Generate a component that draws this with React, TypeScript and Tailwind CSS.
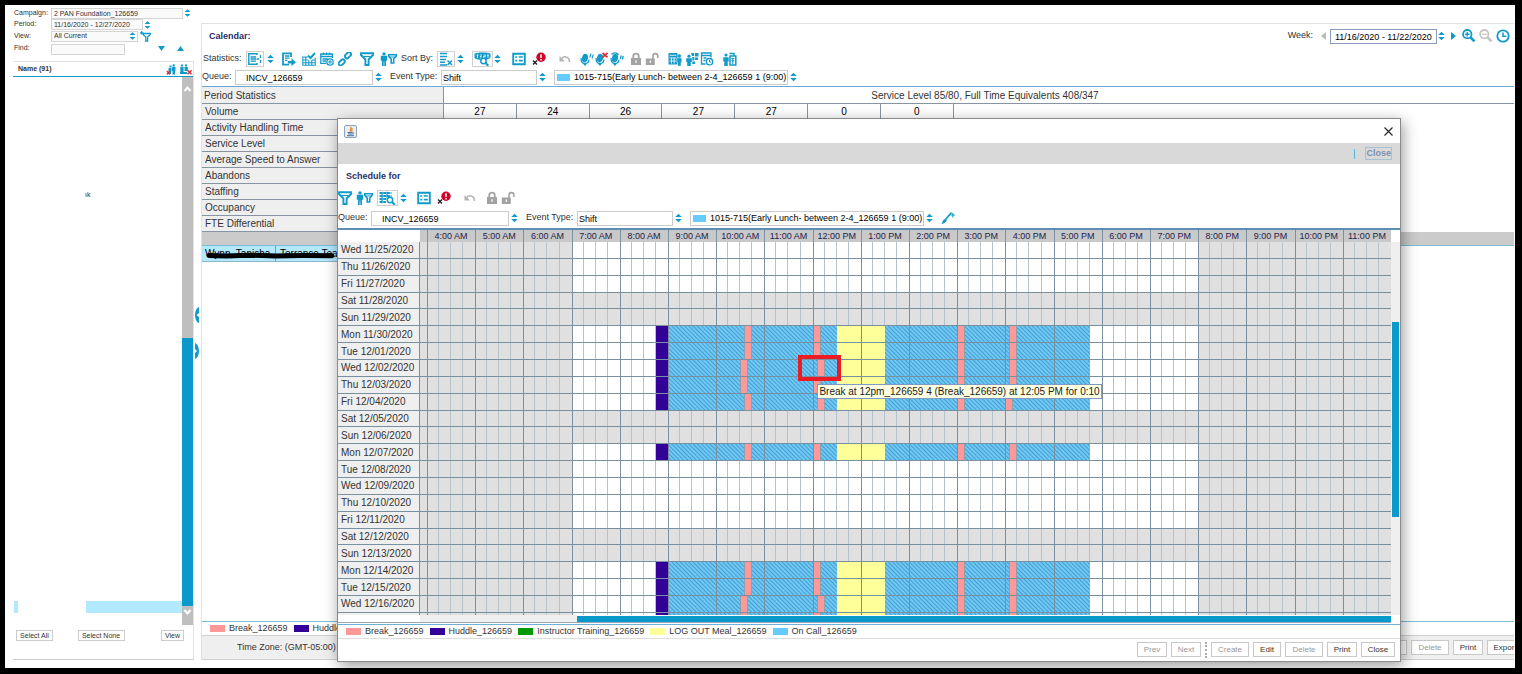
import type { ReactNode } from "react";
import clsx from "clsx";

const BLUE = "#129acb";
const GRAY = "#a3a3a3";

const HOURS = [
  "4:00 AM", "5:00 AM", "6:00 AM", "7:00 AM", "8:00 AM", "9:00 AM", "10:00 AM",
  "11:00 AM", "12:00 PM", "1:00 PM", "2:00 PM", "3:00 PM", "4:00 PM", "5:00 PM",
  "6:00 PM", "7:00 PM", "8:00 PM", "9:00 PM", "10:00 PM", "11:00 PM"
];

const START = 4 * 60;
const SPAN = 20 * 60;

type Kind = "huddle" | "call" | "break" | "meal";
type Shift = { kind: Kind; from: number; to: number };
type Day = { label: string; weekend?: boolean; breaks?: number[] };

const at = (h: number, m = 0) => h * 60 + m;
const pct = (t: number) => `${((t - START) / SPAN) * 100}%`;
// five minute grid line, 1-based
const col = (t: number) => (t - START) / 5 + 1;

const DAYS: Day[] = [
  { label: "Wed 11/25/2020" },
  { label: "Thu 11/26/2020" },
  { label: "Fri 11/27/2020" },
  { label: "Sat 11/28/2020", weekend: true },
  { label: "Sun 11/29/2020", weekend: true },
  { label: "Mon 11/30/2020", breaks: [at(10, 35), at(12), at(15), at(16, 5)] },
  { label: "Tue 12/01/2020", breaks: [at(10, 35), at(12), at(15), at(16, 5)] },
  { label: "Wed 12/02/2020", breaks: [at(10, 30), at(12, 5), at(15), at(16, 5)] },
  { label: "Thu 12/03/2020", breaks: [at(10, 30), at(12), at(15), at(16, 5)] },
  { label: "Fri 12/04/2020", breaks: [at(10, 35), at(12, 5), at(15), at(16)] },
  { label: "Sat 12/05/2020", weekend: true },
  { label: "Sun 12/06/2020", weekend: true },
  { label: "Mon 12/07/2020", breaks: [at(10, 35), at(12), at(15), at(16, 5)] },
  { label: "Tue 12/08/2020" },
  { label: "Wed 12/09/2020" },
  { label: "Thu 12/10/2020" },
  { label: "Fri 12/11/2020" },
  { label: "Sat 12/12/2020", weekend: true },
  { label: "Sun 12/13/2020", weekend: true },
  { label: "Mon 12/14/2020", breaks: [at(10, 35), at(12), at(15), at(16, 5)] },
  { label: "Tue 12/15/2020", breaks: [at(10, 35), at(12), at(15), at(16, 5)] },
  { label: "Wed 12/16/2020", breaks: [at(10, 30), at(12, 5), at(15), at(16, 5)] },
  { label: "", breaks: [at(10, 30), at(12), at(15), at(16, 5)] }
];

const FILL: Record<Kind, string> = {
  huddle: "bg-[#330099]",
  call: "bg-[repeating-linear-gradient(45deg,#6cc9f8_0px,#6cc9f8_1px,#4c9cc8_2px,#6cc9f8_3px)]",
  break: "bg-[#ff9999] border-x border-[#8fa0ac]",
  meal: "bg-[#ffff99]"
};

function shiftsFor(day: Day): Shift[] {
  if (!day.breaks) return [];
  return [
    { kind: "huddle", from: at(8, 45), to: at(9) },
    { kind: "call", from: at(9), to: at(17, 45) },
    { kind: "meal", from: at(12, 30), to: at(13, 30) },
    ...day.breaks.map((t): Shift => ({ kind: "break", from: t, to: t + 10 }))
  ];
}

/* ---------- icons ---------- */

function Icon({ children, w = 14, color = BLUE }: { children: ReactNode; w?: number; color?: string }) {
  return (
    <svg
      width={w}
      height={14}
      viewBox={`0 0 ${w} 14`}
      fill="none"
      stroke={color}
      strokeWidth={1.5}
      className="shrink-0"
      aria-hidden="true"
    >
      {children}
    </svg>
  );
}

function Stepper() {
  return (
    <svg width="7" height="10" viewBox="0 0 7 10" fill={BLUE} className="shrink-0" aria-hidden="true">
      <path d="M3.500.8 6.800 4H.2zM3.500 9.200.2 6h6.600z" />
    </svg>
  );
}

const Funnel = () => (
  <Icon>
    <path d="M1 1.200h12v1.800L8.600 7.500V13H5.400V7.500L1 3z" strokeWidth={1.900} />
    <path d="M3.500 4.500h7" strokeWidth={1.200} />
  </Icon>
);

const PersonFunnel = () => (
  <Icon w={17}>
    <g fill={BLUE} stroke="none">
      <circle cx="4" cy="1.900" r="1.700" />
      <path d="M.8 3.800h6.400v5H6V14H4.300V9.500h-.6V14H2V8.800H.8z" />
    </g>
    <path d="M8.700 2.800h7.500v1.400L13.700 7v4h-2.500V7L8.700 4.200z" strokeWidth={1.600} />
    <path d="M9.500 5h5.500" strokeWidth={1} />
  </Icon>
);

const ListPlus = () => (
  <Icon>
    <path d="M9 3V1.800H.8v10.500H9V11" strokeWidth={1.400} />
    <path d="M2.500 5h5.500M2.500 7h5.500M2.500 9.200h5.500" strokeWidth={1.300} />
    <path d="M8.500 7h2.500M12.500 3v3M12.500 8v3" strokeWidth={1.300} />
  </Icon>
);

const ExportPage = () => (
  <Icon>
    <path d="M9 5V1.300H1v11.400h6" strokeWidth={1.800} />
    <path d="M3 4h4.500M3 6.200h4.500M3 8.400h2.500" strokeWidth={1.300} />
    <path d="M5.800 9H9.500V6.300L14 10.300l-4.500 3.700v-2.500H5.800z" fill={BLUE} stroke="none" />
  </Icon>
);

const CalendarCheck = () => (
  <Icon>
    <path d="M.8 4.500v8.700h12.400V5.500M.8 5h5M.8 8h5M10 8h3M.8 10.700h12.400M3.800 5v8M6.800 8v5M9.800 8v5" strokeWidth={1.100} />
    <path d="M6 3.500 8.500 6 13 1" strokeWidth={1.900} />
  </Icon>
);

const CalendarClock = () => (
  <Icon>
    <path d="M6 11.300H.8V2h11.700v4M.8 4.500h11.700M2.500 7h5.500M2.500 9h3.500" strokeWidth={1.300} />
    <path d="M3.500.5V3M6.500.5V3M9.500.5V3" strokeWidth={1.200} />
    <circle cx="10" cy="10" r="3.200" strokeWidth={1.300} fill="#fff" />
    <path d="M10 8v4M8 10h4" strokeWidth={1} />
  </Icon>
);

const LinkIcon = () => (
  <Icon>
    <rect x="-1" y="-2" width="7" height="4" rx="2" transform="translate(8.200 5) rotate(-45)" strokeWidth={1.900} />
    <rect x="-6" y="-2" width="7" height="4" rx="2" transform="translate(5.500 8.700) rotate(-45)" strokeWidth={1.900} />
  </Icon>
);

const SortX = () => (
  <Icon>
    <path d="M1 1.500h7M1 4.500h7M1 7.500h6M1 10.300h5M1 13h7" strokeWidth={1.500} />
    <path d="m8.500 8.500 4.500 4.500M13 8.500 8.500 13" strokeWidth={1.500} />
  </Icon>
);

const TagSearch = () => (
  <Icon w={17}>
    <path d="M.5 1.500C5 .2 12 .2 16.500 1.500v4.300c-2 1.500-4 2-6 2H6C3 7.500 2 7 .5 6z" fill={BLUE} stroke="none" />
    <path d="M3.500 3v3M2.500 3h2M6 3h1.800M6 4.500h1.500M6 6h1.800M9.500 3h1.800v1.500H9.500V6h1.800M13 3h2M14 3v3" stroke="#fff" strokeWidth={0.8} />
    <circle cx="9.500" cy="9" r="2.700" fill="#fff" strokeWidth={1.500} />
    <path d="m11.500 11 2.800 2.800" strokeWidth={2} />
  </Icon>
);

const GridSearch = () => (
  <Icon w={17}>
    <path d="M.5 2h12M.5 5h12M.5 8h7.500M.5 11h6.500" strokeWidth={1.900} strokeDasharray="3 .7" />
    <path d="M3 .8v11.500M8 .8v6" strokeWidth={1.200} />
    <circle cx="11" cy="9" r="2.700" fill="#fff" strokeWidth={1.500} />
    <path d="m13 11 2.800 2.800" strokeWidth={2} />
  </Icon>
);

const ListBox = () => (
  <Icon>
    <path d="M1.200 1.700h11.600v10.600H1.200z" strokeWidth={1.900} />
    <path d="M3.300 5h2M3.300 8.700h2M6.800 5h4M6.800 8.700h4" strokeWidth={1.700} />
  </Icon>
);

const ErrorX = () => (
  <Icon>
    <circle cx="9" cy="5.200" r="4.700" fill="#d4002a" stroke="none" />
    <path d="M9 2.200v3.800M9 7v1.500" stroke="#fff" strokeWidth={1.500} />
    <path d="m1 8.500 4 4M5 8.500l-4 4" stroke="#222" strokeWidth={1.400} />
  </Icon>
);

const Undo = () => (
  <Icon w={12} color="#b4b4b4">
    <path d="M2.500 7C4 3.500 10.500 4 10.500 10" strokeWidth={1.600} />
    <path d="M.5 4v5.500H6z" fill="#b4b4b4" stroke="none" />
  </Icon>
);

function Mic({ mark }: { mark: "waves" | "x" | "arc" }) {
  return (
    <Icon>
      <ellipse cx="5" cy="6" rx="3" ry="4.200" transform="rotate(12 5 6)" fill={BLUE} stroke="none" />
      <path d="M1 6c0 4 2 5.500 4 5.500S8.800 10.500 9 7.500" strokeWidth={1.300} />
      <path d="M2.800 11.500h4.200L5 14z" fill={BLUE} stroke="none" />
      {mark === "waves" && <path d="m9.700 5.500 1.300-4M12 6.500l1.300-4" strokeWidth={1.100} />}
      {mark === "x" && <path d="m7.500.8 5 4.600M12.500.8l-5 4.600" stroke="#d92f38" strokeWidth={1.800} />}
      {mark === "arc" && <path d="M1.500 2.500C3 .5 7 .3 8.500 2.800M10.300 7l1-3.500M12.300 7.500l1-3.500" strokeWidth={1.300} />}
    </Icon>
  );
}

const Lock = () => (
  <Icon w={12} color={GRAY}>
    <path d="M1 6h10v7H1z" fill={GRAY} stroke="none" />
    <path d="M3.300 7V4c0-3.200 5.400-3.200 5.400 0v3" strokeWidth={1.900} />
    <path d="M6 8.200v2.800" stroke="#fff" strokeWidth={1.200} />
  </Icon>
);

const Unlock = () => (
  <Icon color={GRAY}>
    <path d="M.8 6.500h9V13h-9z" fill={GRAY} stroke="none" />
    <path d="M8 7V4c0-3.200 4.800-3.200 4.800 0v2" strokeWidth={1.600} />
    <path d="M5.300 8.500v2.500" stroke="#fff" strokeWidth={1.200} />
  </Icon>
);

const GridPerson = () => (
  <Icon>
    <path d="M.5 1h9v11.500h-9z" fill={BLUE} stroke="none" />
    <path d="M1.700 3.300h6.600M1.500 6H8M1.500 9H8M3.500 5.500v6M6.200 5.500v6" stroke="#fff" strokeWidth={0.8} />
    <path d="M8.800 5.800h5v4.700h-.8V14h-3.400v-3.500h-.8z" fill={BLUE} stroke="#fff" strokeWidth={0.500} />
    <circle cx="11.300" cy="4" r="1.700" fill={BLUE} stroke="none" />
  </Icon>
);

const People = () => (
  <Icon>
    <g fill={BLUE} stroke="none">
      <circle cx="4" cy="4.200" r="1.600" />
      <path d="M1.200 6.300h5.600V10H5.800v4H2.200v-4h-1zM6 1h3v3H7zM10 1h3.500v3.500H10zM7.300 5h2v3.500h-2zM10 5.500h3V8h-3zM7.300 9.500H10V12H7.300z" />
    </g>
  </Icon>
);

const PageClock = () => (
  <Icon>
    <path d="M5.500 12H1.500V1h9.500v4.500M1.500 3.500H11M3.500 6h3M3.500 8.500h2" strokeWidth={1.300} />
    <circle cx="9.500" cy="9.700" r="3.200" fill="#fff" strokeWidth={1.300} />
    <path d="M9.500 8v2h1.800" strokeWidth={1} />
  </Icon>
);

const PersonDoc = () => (
  <Icon>
    <circle cx="3" cy="3" r="1.600" fill={BLUE} stroke="none" />
    <path d="M.3 5.200h5.400V9.500h-1V14H1.300V9.500h-1z" fill={BLUE} stroke="none" />
    <path d="M7 4h5.800v9H7zM6.500 1.500h4.500V4" strokeWidth={1.500} />
    <path d="M8.300 6.500h3M8.300 8.800h3M9.800 6v6" strokeWidth={1.100} />
  </Icon>
);

const Brush = () => (
  <Icon>
    <path d="M10.500 1.500 4.500 8.500" strokeWidth={1.800} />
    <path d="M5.800 8.800c0 2-2.500 3.900-5.300 4.200.9-1.200.8-3.500 3-5z" fill={BLUE} stroke="none" />
    <path d="M9.500 4H14M11.800 2v4.500" strokeWidth={1.100} />
  </Icon>
);

function Magnifier({ color, plus }: { color: string; plus?: boolean }) {
  return (
    <Icon color={color}>
      <circle cx="5.300" cy="5.200" r="4.200" strokeWidth={1.800} />
      <path d="m8.500 8.400 4 4" strokeWidth={2.700} />
      <path d={plus ? "M3 5.200h4.600M5.300 2.900v4.600" : "M3 5.200h4.600"} strokeWidth={1.400} />
    </Icon>
  );
}

const ClockIcon = () => (
  <Icon>
    <circle cx="7" cy="7" r="5.700" strokeWidth={1.800} />
    <path d="M7 3.500v3.800h3.300" strokeWidth={1.500} />
  </Icon>
);

/* ---------- small controls ---------- */

function Tool({ label, boxed, className, children }: { label: string; boxed?: boolean; className?: string; children: ReactNode }) {
  return (
    <button
      type="button"
      aria-label={label}
      className={clsx("flex h-4 shrink-0 items-center justify-center", boxed && "border border-[#cfcfcf] px-px", className)}
    >
      {children}
    </button>
  );
}

function PushButton({ children, label, disabled, className }: { children?: ReactNode; label?: string; disabled?: boolean; className?: string }) {
  return (
    <button
      type="button"
      aria-label={label}
      disabled={disabled}
      className={clsx(
        "h-[15px] shrink-0 border border-[#c8c8c8] bg-white text-center text-[8px] leading-[13px] text-[#333] disabled:text-[#999]",
        className
      )}
    >
      {children}
    </button>
  );
}

function QueueBar({ id, className, children }: { id: string; className: string; children?: ReactNode }) {
  return (
    <div className={clsx("flex shrink-0 items-center text-[9px] text-[#333]", className)}>
      <label htmlFor={`${id}-queue`} className="w-[33px]">Queue:</label>
      <select id={`${id}-queue`} className="h-[15px] w-[138px] appearance-none border border-[#ccc] pt-px pl-[10px] text-black">
        <option>INCV_126659</option>
      </select>
      <span className="ml-0.5"><Stepper /></span>
      <label htmlFor={`${id}-type`} className="ml-2 w-[51px]">Event Type:</label>
      <select id={`${id}-type`} className="h-[15px] w-24 appearance-none border border-[#ccc] pt-px pl-px text-black">
        <option>Shift</option>
      </select>
      <span className="ml-0.5"><Stepper /></span>
      <div className="ml-2 flex h-[15px] w-[234px] items-center border border-[#ccc] pl-0.5">
        <span className="h-[7px] w-[15px] bg-[#66ccff]" />
        <select aria-label="Event" className="ml-1 flex-1 appearance-none pt-px text-black">
          <option>1015-715(Early Lunch- between 2-4_126659 1 (9:00)</option>
        </select>
      </div>
      <span className="ml-0.5"><Stepper /></span>
      {children}
    </div>
  );
}

function LegendItem({ swatch, name }: { swatch: string; name: string }) {
  return (
    <span className="flex items-center gap-1">
      <span className={clsx("h-[7px] w-[15px]", swatch)} />
      {name}
    </span>
  );
}

/* ---------- left panel ---------- */

function Sidebar() {
  return (
    <aside className="flex w-[181px] shrink-0 flex-col pb-2 text-[7px] text-[#333]">
      <div className="flex h-14 shrink-0 flex-col pt-0.5 pl-px">
        <div className="flex h-3 items-center">
          <label htmlFor="campaign" className="w-[37px]">Campaign:</label>
          <select id="campaign" className="h-[11px] w-[132px] appearance-none border border-[#d4d4d4] bg-[#fafafa] pl-0.5">
            <option>2 PAN Foundation_126659</option>
          </select>
          <span className="ml-px scale-90"><Stepper /></span>
        </div>
        <div className="flex h-[11px] items-center">
          <label htmlFor="period" className="w-[37px]">Period:</label>
          <select id="period" className="h-[11px] w-[92px] appearance-none border border-[#d4d4d4] bg-[#fafafa] pl-0.5">
            <option>11/16/2020 - 12/27/2020</option>
          </select>
          <span className="ml-px scale-90"><Stepper /></span>
        </div>
        <div className="flex h-3 items-center">
          <label htmlFor="view" className="w-[37px]">View:</label>
          <div className="flex h-[11px] w-[87px] items-center justify-between border border-[#d4d4d4] bg-[#fafafa] pr-px pl-0.5">
            <select id="view" className="flex-1 appearance-none">
              <option>All Current</option>
            </select>
            <span className="scale-90"><Stepper /></span>
          </div>
          <button type="button" aria-label="Filter" className="ml-0.5">
            <svg width="11" height="11" viewBox="0 0 11 11" fill="none" stroke={BLUE} aria-hidden="true">
              <path d="M3 2.500h7.300v1L7.600 6v4H5.800V6L3 3.500z" strokeWidth="1.300" />
              <path d="M0 1.800h3.500M1.700 0v3.500" strokeWidth="1.200" />
            </svg>
          </button>
        </div>
        <div className="flex h-[13px] items-center">
          <label htmlFor="find" className="w-[37px]">Find:</label>
          <input id="find" className="mt-px h-[11px] w-[74px] border border-[#d4d4d4] bg-[#fafafa]" />
          <button type="button" aria-label="Find next" className="ml-[33px]">
            <svg width="7" height="5" viewBox="0 0 7 5" fill={BLUE}><path d="M0 0h7L3.500 5z" /></svg>
          </button>
          <button type="button" aria-label="Find previous" className="ml-3">
            <svg width="7" height="5" viewBox="0 0 7 5" fill={BLUE}><path d="M0 5h7L3.500 0z" /></svg>
          </button>
        </div>
      </div>
      <div className="flex min-h-0 flex-1 flex-col border-t border-r border-b border-[#e2e2e2] border-b-[#ccc]">
        <div className="flex h-[15px] shrink-0 items-center border-b border-[#129acb] pl-[5px] font-bold">
          <span className="flex-1">Name (91)</span>
          <svg width="27" height="11" viewBox="0 0 27 11" fill={BLUE} aria-hidden="true">
            <path d="M3.500 1.500h2v2h-2zM2.500 4h3v3.500H5V10H3V7.500h-.5zM6.700.3h2v2h-2zM6 2.800h3.500V7H9v3.500H6.500V7H6z" />
            <path d="m.8 7 3 3.500M3.800 7l-3 3.500" stroke="#d92f38" strokeWidth="1.200" />
            <path d="M15 .5h2v2h-2zM19 .5h2v2h-2zM14.300 3h3.300v5h-3.300zM18.500 3h3.300v4h-3.300zM14 8h7v2h-7z" />
            <path d="m21.500 6.300 4 4M25.500 6.300l-4 4" stroke="#d92f38" strokeWidth="1.500" />
          </svg>
        </div>
        <div className="flex min-h-0 flex-1">
          <div className="flex flex-1 flex-col justify-between pl-px">
            <p className="mt-28 ml-[71px] text-[7px] leading-3">ık</p>
            <div className="mb-3 flex h-3 justify-between">
              <span className="w-1 bg-[#b2e9ff]" />
              <span className="w-24 bg-[#b2e9ff]" />
            </div>
          </div>
          <div className="flex w-[11px] flex-col bg-[#bfbfbf]">
            <svg width="11" height="261" viewBox="0 0 11 261" fill="none" stroke="#fff" strokeWidth="2" aria-hidden="true">
              <path d="m2.500 14 3-3.500L8.500 14" />
            </svg>
            <div className="flex-1 bg-[#0c98cb]" />
            <svg width="11" height="19" viewBox="0 0 11 19" fill="none" stroke="#fff" strokeWidth="2" aria-hidden="true">
              <path d="m2.500 4 3 3.500L8.500 4" />
            </svg>
          </div>
        </div>
        <div className="flex h-[34px] shrink-0 items-start justify-between pt-[5px] pr-[9px] pl-[3px] leading-[9px]">
          <button type="button" className="h-[11px] w-[37px] border border-[#ccc]">Select All</button>
          <button type="button" className="mr-3 h-[11px] w-[47px] border border-[#ccc]">Select None</button>
          <button type="button" className="h-[11px] w-[23px] border border-[#ccc]">View</button>
        </div>
      </div>
    </aside>
  );
}

/* ---------- calendar page behind the dialog ---------- */

const STATS = [
  "Activity Handling Time", "Service Level", "Average Speed to Answer",
  "Abandons", "Staffing", "Occupancy", "FTE Differential"
];
const VOLUME = [27, 24, 26, 27, 27, 0, 0];

function CalendarPage() {
  return (
    <main className="mr-px flex min-w-0 flex-1 flex-col overflow-hidden pt-[18px] pb-2">
      <div className="flex min-h-0 flex-1 flex-col border-t border-l border-[#e2e2e2]">
        <div className="flex h-[26px] shrink-0 items-center justify-between pl-[7px] text-[9px]">
          <h1 className="font-bold text-[#1f2f66]">Calendar:</h1>
          <div className="-mr-[5px] flex items-center pb-0.5">
            <label htmlFor="week" className="text-[#333]">Week:</label>
            <button type="button" aria-label="Previous week" className="ml-2">
              <svg width="5" height="8" viewBox="0 0 5 8" fill="#bbb"><path d="M5 0v8L0 4z" /></svg>
            </button>
            <select id="week" className="ml-1 h-[15px] w-[107px] appearance-none border border-[#8b9bc0] pt-px pl-1 text-black">
              <option>11/16/2020 - 11/22/2020</option>
            </select>
            <span className="ml-px"><Stepper /></span>
            <button type="button" aria-label="Next week" className="ml-1.5">
              <svg width="5" height="8" viewBox="0 0 5 8" fill={BLUE}><path d="M0 0v8l5-4z" /></svg>
            </button>
            <Tool label="Zoom in" className="ml-1.5"><Magnifier color={BLUE} plus /></Tool>
            <Tool label="Zoom out" className="ml-[3px]"><Magnifier color="#c4c4c4" /></Tool>
            <Tool label="Time" className="ml-[3px]"><ClockIcon /></Tool>
            <svg width="6" height="5" viewBox="0 0 6 5" fill={BLUE} className="ml-[3px]"><path d="M0 5h6V0z" /></svg>
          </div>
        </div>

        <div className="flex h-[18px] shrink-0 items-center pl-px text-[9px] text-[#333]">
          <span className="w-[43px]">Statistics:</span>
          <Tool label="Statistics" boxed><ListPlus /></Tool>
          <span className="ml-[3px]"><Stepper /></span>
          <Tool label="Export" className="ml-2"><ExportPage /></Tool>
          <Tool label="Approve" className="ml-1.5"><CalendarCheck /></Tool>
          <Tool label="Calendar time" className="ml-1"><CalendarClock /></Tool>
          <Tool label="Link" className="ml-1"><LinkIcon /></Tool>
          <Tool label="Filter" className="ml-2"><Funnel /></Tool>
          <Tool label="Agent filter" className="ml-1.5"><PersonFunnel /></Tool>
          <span className="ml-1 w-9">Sort By:</span>
          <Tool label="Sort" boxed><SortX /></Tool>
          <span className="ml-0.5"><Stepper /></span>
          <Tool label="Find text" boxed className="ml-2"><TagSearch /></Tool>
          <span className="ml-px"><Stepper /></span>
          <Tool label="Details" className="ml-[11px]"><ListBox /></Tool>
          <Tool label="Errors" className="ml-1.5"><ErrorX /></Tool>
          <Tool label="Undo" className="ml-[13px]"><Undo /></Tool>
          <Tool label="Notify" className="ml-[9px]"><Mic mark="waves" /></Tool>
          <Tool label="Stop notify" className="ml-px"><Mic mark="x" /></Tool>
          <Tool label="Repeat notify" className="ml-px"><Mic mark="arc" /></Tool>
          <Tool label="Lock" className="ml-1.5"><Lock /></Tool>
          <Tool label="Unlock" className="ml-[3px]"><Unlock /></Tool>
          <Tool label="Agent schedule" className="ml-[9px]"><GridPerson /></Tool>
          <Tool label="Groups" className="ml-[3px]"><People /></Tool>
          <Tool label="Report" className="ml-px"><PageClock /></Tool>
          <Tool label="Agent report" className="ml-[9px]"><PersonDoc /></Tool>
        </div>

        <QueueBar id="page" className="h-[18px]" />

        <table className="flex flex-col border-t border-[#6aa9d3] text-[10px] leading-[15px] text-[#333]">
          <tbody className="flex flex-col">
            <tr className="flex h-[17px] border-b border-[#8795a3]">
              <th className="w-[242px] border-r border-[#8795a3] bg-[#efefef] pt-px pl-0.5 text-left font-normal">Period Statistics</th>
              <td className="flex-1 pt-px pl-3 text-center">Service Level 85/80, Full Time Equivalents 408/347</td>
            </tr>
            <tr className="flex h-4">
              <th className="w-[242px] border-r border-b border-[#8795a3] bg-[#efefef] pl-[3px] text-left font-normal">Volume</th>
              {VOLUME.map((v, i) => (
                <td key={i} className="flex-1 border-r border-b border-[#8795a3] text-center text-black">{v}</td>
              ))}
              <td className="flex-[7.8]" />
            </tr>
            {STATS.map((name) => (
              <tr key={name} className="flex h-4">
                <th className="w-[242px] border-b border-[#8795a3] bg-[#efefef] pl-[3px] text-left font-normal">{name}</th>
              </tr>
            ))}
          </tbody>
        </table>
        <div className="h-[14px] shrink-0 border-b border-[#7dbdd8] bg-[#cbcbcb]" />
        <div className="relative flex h-4 w-72 shrink-0 border-b border-[#8fb6c6] bg-[#b2e9ff] text-[10px] leading-4 text-black">
          <span className="w-[74px] border-r border-[#8795a3] pl-[3px]">Wynn, Tanisha</span>
          <span className="pl-1">Terrance Tea</span>
          <svg className="absolute top-1.5 left-1" width="130" height="7" viewBox="0 0 130 7" fill="none" stroke="#000" strokeLinecap="round" aria-hidden="true">
            <path d="M3 3.500 20 4l22-.8L70 4l26-.4 30 .2" strokeWidth="5" />
          </svg>
        </div>
        <div className="flex-1" />
        <div className="flex h-[14px] shrink-0 items-center gap-1.5 border-t border-[#7dbdd8] pl-2 text-[9px] text-[#333]">
          <LegendItem swatch="bg-[#ff9999]" name="Break_126659" />
          <LegendItem swatch="bg-[#330099]" name="Huddle" />
        </div>
        <div className="flex h-[25px] shrink-0 items-center border-y border-[#d0d0d0] bg-[#efefef] pl-[35px] text-[9px] text-[#333]">
          <span className="flex-1 pt-px">Time Zone: (GMT-05:00) E</span>
          <div className="-mr-[9px] flex gap-1">
            <PushButton label="Edit" className="w-7" />
            <PushButton disabled className="w-[38px]">Delete</PushButton>
            <PushButton className="w-[30px]">Print</PushButton>
            <PushButton className="w-9">Export</PushButton>
          </div>
        </div>
      </div>
    </main>
  );
}

/* ---------- schedule dialog ---------- */

function DayRow({ day }: { day: Day }) {
  return (
    <tr
      className={clsx(
        "flex min-h-0 overflow-hidden border-[#7890a0]",
        day.label ? "flex-1 border-b" : "h-0.5 shrink-0"
      )}
    >
      <th className="flex w-[82px] shrink-0 items-center border-r border-[#7890a0] bg-[#efefef] pt-px pl-[3px] text-left text-[10px] leading-3 font-normal text-[#333]">
        {day.label}
      </th>
      <td className="w-[7px] shrink-0 bg-[#e0e0e0]" />
      <td className="grid min-w-0 flex-1 grid-cols-[repeat(240,minmax(0,1fr))] grid-rows-[minmax(0,1fr)]">
        {HOURS.map((hour, i) => (
          <div
            key={hour}
            style={{ gridColumn: `${i * 12 + 1} / span 12`, gridRow: 1 }}
            className={clsx(
              "grid grid-cols-4 divide-x divide-[#b4c3cc]",
              day.weekend || i < 3 || i > 15 ? "bg-[#e0e0e0]" : "bg-white"
            )}
          >
            <span /><span /><span /><span />
          </div>
        ))}
        {shiftsFor(day).map((s) => (
          <div
            key={`${s.kind}${s.from}`}
            style={{ gridColumn: `${col(s.from)} / ${col(s.to)}`, gridRow: 1 }}
            className={FILL[s.kind]}
          />
        ))}
      </td>
    </tr>
  );
}

function ScheduleDialog() {
  return (
    <section
      role="dialog"
      aria-label="Schedule for"
      className="absolute top-[113px] right-[114px] bottom-1.5 left-[332px] flex flex-col border border-[#8a8a8a] bg-white shadow-[2px_4px_14px_rgba(0,0,0,0.4)]"
    >
      <div className="flex h-6 shrink-0 items-center justify-between pr-[7px] pl-1.5">
        <svg width="13" height="13" viewBox="0 0 13 13" fill="none" aria-hidden="true">
          <rect x=".5" y=".5" width="12" height="12" rx="1.500" fill="#e9eef3" stroke="#8fa3b5" />
          <path d="M6.500 2c2 1.200-1.800 2.300.3 4.500M8.500 3.500c-1.500 1 .3 1.500-1 3" stroke="#e8862b" strokeWidth="1.300" />
          <path d="M3.500 7.500h5c1.600-.3 1.500 1.700 0 1.700M4 9h4.500M3 10.700h7" stroke="#47719a" />
        </svg>
        <button type="button" aria-label="Close window">
          <svg width="9" height="9" viewBox="0 0 9 9" stroke="#222" strokeWidth="1.100" aria-hidden="true">
            <path d="m.5.5 8 8M8.500.5l-8 8" />
          </svg>
        </button>
      </div>
      <div className="flex h-[21px] shrink-0 items-center justify-end bg-[#d9d9d9] pr-[8px]">
        <span className="mr-2.5 h-2.5 w-px bg-[#5bb5d6]" />
        <button type="button" className="h-[13px] border border-[#a6c3d6] text-[9px] leading-[11px] font-bold text-[#7d91b5]">Close</button>
      </div>
      <h2 className="h-6 shrink-0 pl-2 text-[9px] leading-6 font-bold text-[#1f2f66]">Schedule for</h2>
      <div className="flex h-5 shrink-0 items-center">
        <Tool label="Filter"><Funnel /></Tool>
        <Tool label="Agent filter" className="ml-1"><PersonFunnel /></Tool>
        <Tool label="Find" boxed className="ml-1"><GridSearch /></Tool>
        <span className="ml-0.5"><Stepper /></span>
        <Tool label="Details" className="ml-2.5"><ListBox /></Tool>
        <Tool label="Errors" className="ml-1.5"><ErrorX /></Tool>
        <Tool label="Undo" className="ml-[13px]"><Undo /></Tool>
        <Tool label="Lock" className="ml-2.5"><Lock /></Tool>
        <Tool label="Unlock" className="ml-[3px]"><Unlock /></Tool>
      </div>
      <QueueBar id="dialog" className="h-5">
        <Tool label="Paint event" className="ml-2"><Brush /></Tool>
      </QueueBar>

      <div className="flex min-h-0 flex-1 border-t-2 border-[#5d8fb5]">
        <div className="flex min-w-0 flex-1 flex-col">
          <table className="relative flex min-h-0 flex-1 flex-col">
            <thead className="shrink-0">
              <tr className="flex h-3">
                <th className="w-[82px] shrink-0" />
                <th className="w-[7px] shrink-0 bg-[#c9c9c9]" />
                {HOURS.map((hour) => (
                  <th key={hour} className="min-w-0 flex-1 bg-[#c9c9c9] text-[9px] leading-[13px] font-normal text-[#22224d]">{hour}</th>
                ))}
              </tr>
            </thead>
            <tbody className="flex min-h-0 flex-1 flex-col">
              {DAYS.map((day) => <DayRow key={day.label} day={day} />)}
            </tbody>
            <caption className="pointer-events-none absolute inset-y-0 right-0 left-[89px] grid grid-cols-20 text-left">
              {HOURS.map((hour) => <span key={hour} className="border-l border-[#7890a0]" />)}
            </caption>
          </table>
          <div className="flex h-2 shrink-0 items-center border-b border-[#9aa8b5]">
            <span className="w-[82px]" />
            <span className="h-full w-[157px] bg-[#efefef]" />
            <span className="h-1.5 flex-1 bg-[#0c98cb]" />
          </div>
        </div>
        <div className="mt-3 mb-2 flex w-[9px] shrink-0 flex-col bg-[#efefef] px-px">
          <div className="mt-20 h-[195px] bg-[#0c98cb]" />
        </div>
      </div>

      <div className="mt-px flex h-[15px] shrink-0 items-center gap-1.5 border-y border-t-[#6fb0d6] border-b-[#ddd] pl-2 text-[9px] text-[#333]">
        <LegendItem swatch="bg-[#ff9999]" name="Break_126659" />
        <LegendItem swatch="bg-[#330099]" name="Huddle_126659" />
        <LegendItem swatch="bg-[#009900]" name="Instructor Training_126659" />
        <LegendItem swatch="bg-[#ffff99]" name="LOG OUT Meal_126659" />
        <LegendItem swatch="bg-[#66ccff]" name="On Call_126659" />
      </div>
      <div className="flex h-[22px] shrink-0 items-center justify-end gap-1 pr-[5px] pb-px">
        <PushButton disabled className="w-[30px]">Prev</PushButton>
        <PushButton disabled className="w-[30px]">Next</PushButton>
        <span className="h-4 border-l-2 border-dotted border-[#aaa]" />
        <PushButton disabled className="w-[38px]">Create</PushButton>
        <PushButton className="w-7">Edit</PushButton>
        <PushButton disabled className="w-[38px]">Delete</PushButton>
        <PushButton className="w-[30px]">Print</PushButton>
        <PushButton className="w-[34px]">Close</PushButton>
      </div>

      <div className="pointer-events-none absolute top-0 right-[9px] bottom-0 left-[89px]">
        <div style={{ left: pct(at(11, 42)) }} className="absolute top-[236px] h-[26px] w-[43px] border-4 border-[#ed1c24]" />
        <div
          role="tooltip"
          style={{ left: pct(at(12, 6)) }}
          className="absolute top-[265px] border border-[#7f9bc4] bg-[#ffffe1] px-px text-[10px] leading-[13px] text-[#222]"
        >
          Break at 12pm_126659 4 (Break_126659) at 12:05 PM for 0:10
        </div>
      </div>
    </section>
  );
}

export default function App() {
  return (
    <div className="h-screen bg-black pt-[5px] pr-[7px] pb-1.5 pl-[5px] font-['Liberation_Sans',Arial,sans-serif] whitespace-nowrap">
      <div className="relative flex h-full overflow-hidden bg-white pl-2">
        <Sidebar />
        <div className="flex w-[7px] shrink-0 flex-col items-end justify-center gap-5 overflow-hidden pr-0.5 pb-2">
          <button type="button" aria-label="Collapse panel">
            <svg width="4" height="16" viewBox="0 0 4 16" fill={BLUE}><path d="M4 0v6L1.500 8 4 10v6C-1.300 14-1.300 2 4 0z" /></svg>
          </button>
          <button type="button" aria-label="Expand panel">
            <svg width="4" height="16" viewBox="0 0 4 16" fill={BLUE}><path d="M0 0c5.300 2 5.300 14 0 16v-6l2-2-2-2z" /></svg>
          </button>
        </div>
        <CalendarPage />
        <ScheduleDialog />
      </div>
    </div>
  );
}
